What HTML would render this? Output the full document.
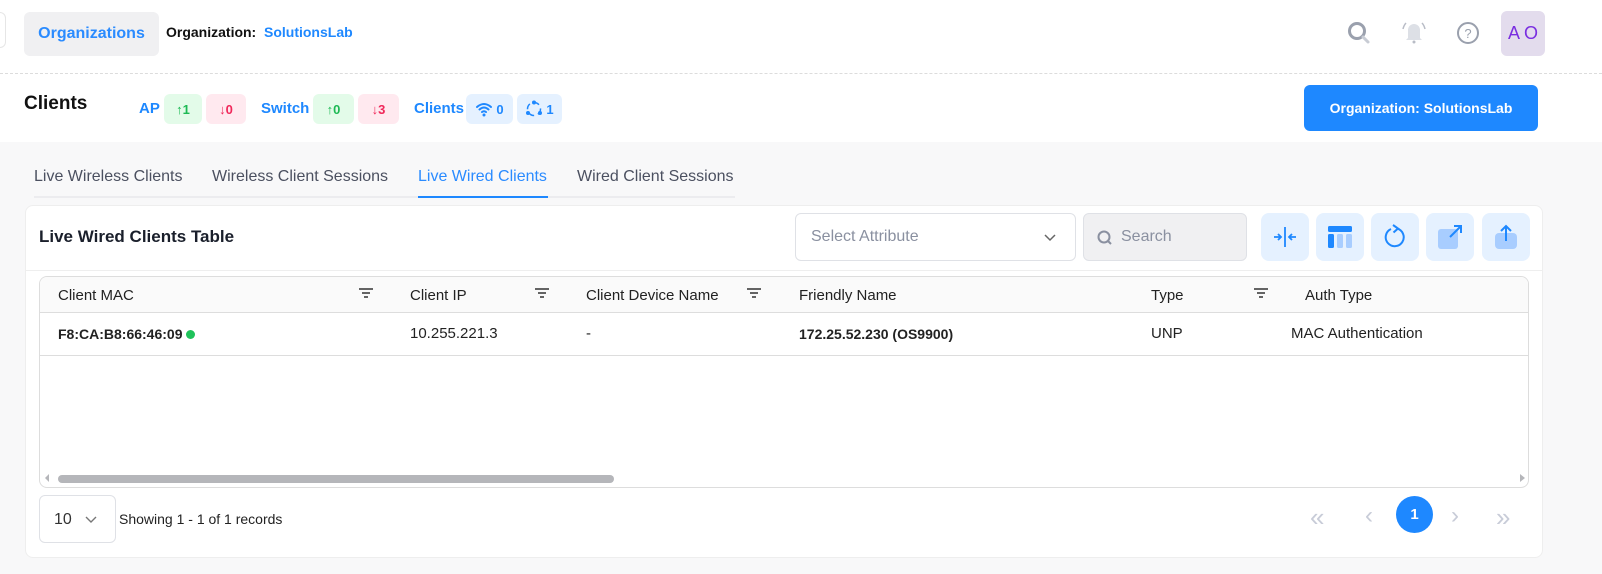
<!DOCTYPE html>
<html><head><meta charset="utf-8"><style>
*{box-sizing:border-box;margin:0;padding:0}
body{width:1602px;height:574px;overflow:hidden;font-family:"Liberation Sans",sans-serif;background:#f8f8f9;position:relative;color:#1f2430}
.abs{position:absolute}
.top{left:0;top:0;width:1602px;height:142px;background:#fff}
.dash{left:0;top:73px;width:1602px;border-top:1px dashed #dcdcdc}
.blue{color:#1e88ff}
.badge{position:absolute;top:94px;height:30px;border-radius:6px;font-size:13px;font-weight:bold;display:flex;align-items:center;justify-content:center;gap:3px}
.g{background:#e3fbe9;color:#1db954}.r{background:#ffe9ef;color:#f0285a}.b{background:#e5f1ff;color:#1e88ff}
.tab{position:absolute;top:168px;font-size:16px;color:#4b5060}
.card{left:25px;top:205px;width:1518px;height:353px;background:#fff;border-radius:8px;border:1px solid #eee}
.ib{position:absolute;top:213px;width:48px;height:48px;border-radius:8px;background:#e5f1ff;display:flex;align-items:center;justify-content:center}
.th{position:absolute;top:287px;font-size:15px;color:#222}
.td{position:absolute;top:325px;font-size:15px;color:#222}
.filt{position:absolute;top:287px}
</style></head><body>
<div class="abs top"></div>
<div class="abs" style="left:-10px;top:12px;width:16px;height:36px;border:1px solid #e6e6e6;border-radius:6px;background:#fff"></div>
<div class="abs" style="left:24px;top:12px;width:135px;height:44px;background:#f0f0f2;border-radius:6px;color:#2a8bff;font-size:16px;font-weight:bold;display:flex;align-items:center;justify-content:center">Organizations</div>
<div class="abs" style="left:166px;top:24px;font-size:14px;font-weight:bold;color:#111">Organization:&nbsp; <span class="blue">SolutionsLab</span></div>
<svg class="abs" style="left:1346px;top:20px" width="26" height="26" viewBox="0 0 26 26"><circle cx="11" cy="11" r="7.5" fill="none" stroke="#9aa0ad" stroke-width="3"/><path d="M17 17l5 5" stroke="#c8ccd4" stroke-width="3" stroke-linecap="round"/></svg>
<svg class="abs" style="left:1400px;top:18px" width="28" height="28" viewBox="0 0 28 28"><path d="M8 20V12a6 6 0 0 1 12 0v8l2 2H6z" fill="#dde0e6"/><circle cx="14" cy="24" r="1.5" fill="#b8bcc6"/><path d="M3 11q1-4 3-6M25 11q-1-4-3-6" stroke="#b8bcc6" stroke-width="1.5" fill="none"/></svg>
<svg class="abs" style="left:1456px;top:21px" width="24" height="24" viewBox="0 0 24 24"><circle cx="12" cy="12" r="10" fill="none" stroke="#9aa0ad" stroke-width="2"/><text x="12" y="17" text-anchor="middle" font-size="13" fill="#9aa0ad" font-family="Liberation Sans">?</text></svg>
<div class="abs" style="left:1501px;top:11px;width:44px;height:45px;background:#e3dced;border-radius:6px;color:#7a2ee0;font-size:18px;display:flex;align-items:center;justify-content:center">A O</div>
<div class="abs dash"></div>
<div class="abs" style="left:24px;top:93px;font-size:19px;font-weight:bold;color:#111">Clients</div>
<div class="abs blue" style="left:139px;top:100px;font-size:15px;font-weight:bold">AP</div>
<div class="badge g" style="left:164px;width:38px">↑1</div>
<div class="badge r" style="left:206px;width:40px">↓0</div>
<div class="abs blue" style="left:261px;top:100px;font-size:15px;font-weight:bold">Switch</div>
<div class="badge g" style="left:313px;width:41px">↑0</div>
<div class="badge r" style="left:358px;width:41px">↓3</div>
<div class="abs blue" style="left:414px;top:100px;font-size:15px;font-weight:bold">Clients</div>
<div class="badge b" style="left:466px;width:47px"><svg width="18" height="18" viewBox="0 0 18 18"><path d="M2 7q7-6 14 0M4.5 9.5q4.5-4 9 0M7 12q2-1.5 4 0" stroke="#1e88ff" stroke-width="2" fill="none" stroke-linecap="round"/><circle cx="9" cy="15" r="1.5" fill="#1e88ff"/></svg> 0</div>
<div class="badge b" style="left:517px;width:45px"><svg width="18" height="18" viewBox="0 0 18 18"><circle cx="9" cy="9" r="6.5" fill="none" stroke="#1e88ff" stroke-width="1.5" stroke-dasharray="6 4"/><circle cx="9" cy="2.5" r="2" fill="#1e88ff"/><circle cx="3" cy="13" r="2" fill="#1e88ff"/><circle cx="15" cy="13" r="2" fill="#1e88ff"/></svg> 1</div>
<div class="abs" style="left:1304px;top:85px;width:234px;height:46px;background:#1e88ff;border-radius:6px;color:#fff;font-size:14px;font-weight:bold;display:flex;align-items:center;justify-content:center">Organization: SolutionsLab</div>

<div class="tab" style="left:34px">Live Wireless Clients</div>
<div class="tab" style="left:212px">Wireless Client Sessions</div>
<div class="tab" style="left:418px;color:#2a8bff">Live Wired Clients</div>
<div class="tab" style="left:577px">Wired Client Sessions</div>
<div class="abs" style="left:34px;top:196px;width:701px;height:2px;background:#ececef"></div>
<div class="abs" style="left:418px;top:196px;width:130px;height:2px;background:#1e88ff"></div>

<div class="abs card"></div>
<div class="abs" style="left:39px;top:227px;font-size:17px;font-weight:bold;color:#1a1f2b">Live Wired Clients Table</div>
<div class="abs" style="left:795px;top:213px;width:281px;height:48px;border:1px solid #dfe1e6;border-radius:6px;background:#fff;font-size:16px;color:#8a90a0;padding:14px 0 0 15px">Select Attribute<svg style="position:absolute;right:18px;top:18px" width="14" height="10" viewBox="0 0 14 10"><path d="M2 3l5 5 5-5" stroke="#666" stroke-width="1.5" fill="none"/></svg></div>
<div class="abs" style="left:1083px;top:213px;width:164px;height:48px;border:1px solid #dfe1e6;border-radius:6px;background:#f0f0f2;font-size:16px;color:#8a90a0;padding:14px 0 0 37px"><svg style="position:absolute;left:12px;top:15px" width="18" height="18" viewBox="0 0 18 18"><circle cx="8" cy="8" r="5.5" fill="none" stroke="#8a90a0" stroke-width="2"/><path d="M12 12l3 3" stroke="#8a90a0" stroke-width="2"/></svg>Search</div>
<div class="ib" style="left:1261px"><svg width="28" height="28" viewBox="0 0 28 28"><path d="M14 4v20M3 14h7M7 11l3 3-3 3M25 14h-7M21 11l-3 3 3 3" stroke="#1e88ff" stroke-width="1.8" fill="none"/></svg></div>
<div class="ib" style="left:1316px"><svg width="26" height="26" viewBox="0 0 26 26"><rect x="1" y="2" width="24" height="6" rx="1.5" fill="#1e88ff"/><rect x="1" y="10" width="6" height="14" rx="1.5" fill="#1e88ff"/><rect x="10" y="10" width="6" height="14" rx="1.5" fill="#a8cdff"/><rect x="19" y="10" width="6" height="14" rx="1.5" fill="#a8cdff"/></svg></div>
<div class="ib" style="left:1371px"><svg width="26" height="26" viewBox="0 0 26 26"><path d="M15 4.5A9 9 0 1 1 9 5" stroke="#1e88ff" stroke-width="2" fill="none"/><path d="M11 1l5 3.5-4.5 4" stroke="#1e88ff" stroke-width="2" fill="none"/></svg></div>
<div class="ib" style="left:1426px"><svg width="28" height="28" viewBox="0 0 28 28"><rect x="2" y="6" width="20" height="20" rx="3" fill="#a8cdff"/><path d="M14 14L25 3M18 3h7v7" stroke="#1e88ff" stroke-width="2" fill="none"/></svg></div>
<div class="ib" style="left:1482px"><svg width="26" height="28" viewBox="0 0 26 28"><rect x="2" y="10" width="22" height="16" rx="4" fill="#a8cdff"/><path d="M13 18V3M8 8l5-5 5 5" stroke="#1e88ff" stroke-width="2" fill="none"/></svg></div>
<div class="abs" style="left:26px;top:270px;width:1516px;border-top:1px solid #eee"></div>

<div class="abs" style="left:39px;top:276px;width:1490px;height:212px;border:1px solid #ddd;border-radius:8px;overflow:hidden">
<div style="height:36px;background:#fafafa;border-bottom:1px solid #ddd"></div>
<div style="height:43px;border-bottom:1px solid #ddd"></div>
<div style="position:absolute;left:18px;bottom:4px;width:556px;height:8px;background:#b5b6ba;border-radius:4px"></div>
<div style="position:absolute;left:5px;bottom:5px;border:4px solid transparent;border-right-color:#b5b6ba;border-left:0"></div>
<div style="position:absolute;right:3px;bottom:5px;border:4px solid transparent;border-left:5px solid #b5b6ba;border-right:0"></div>
</div>
<div class="th" style="left:58px">Client MAC</div>
<div class="th" style="left:410px">Client IP</div>
<div class="th" style="left:586px">Client Device Name</div>
<div class="th" style="left:799px">Friendly Name</div>
<div class="th" style="left:1151px">Type</div>
<div class="th" style="left:1305px">Auth Type</div>
<svg class="filt" style="left:359px" width="14" height="12"><path d="M0 2h14M3 6h8M5 10h4" stroke="#333" stroke-width="1.6"/></svg>
<svg class="filt" style="left:535px" width="14" height="12"><path d="M0 2h14M3 6h8M5 10h4" stroke="#333" stroke-width="1.6"/></svg>
<svg class="filt" style="left:747px" width="14" height="12"><path d="M0 2h14M3 6h8M5 10h4" stroke="#333" stroke-width="1.6"/></svg>
<svg class="filt" style="left:1254px" width="14" height="12"><path d="M0 2h14M3 6h8M5 10h4" stroke="#333" stroke-width="1.6"/></svg>
<div class="td blue" style="left:58px;font-weight:bold;font-size:14px;top:326px">F8:CA:B8:66:46:09 <span style="display:inline-block;width:9px;height:9px;border-radius:50%;background:#1fc25a"></span></div>
<div class="td" style="left:410px">10.255.221.3</div>
<div class="td" style="left:586px">-</div>
<div class="td blue" style="left:799px;font-weight:bold;font-size:14px;top:326px">172.25.52.230 (OS9900)</div>
<div class="td" style="left:1151px">UNP</div>
<div class="td" style="left:1291px">MAC Authentication</div>

<div class="abs" style="left:39px;top:495px;width:77px;height:48px;border:1px solid #dfe1e6;border-radius:6px;font-size:16px;color:#333;padding:15px 0 0 14px">10<svg style="position:absolute;left:45px;top:20px" width="12" height="8" viewBox="0 0 12 8"><path d="M1 1l5 5 5-5" stroke="#777" stroke-width="1.4" fill="none"/></svg></div>
<div class="abs" style="left:119px;top:511px;font-size:14px;color:#222">Showing 1 - 1 of 1 records</div>
<div class="abs" style="left:1310px;top:502px;font-size:26px;color:#c8ccd8">«</div>
<div class="abs" style="left:1365px;top:502px;font-size:24px;color:#c8ccd8">‹</div>
<div class="abs" style="left:1396px;top:496px;width:37px;height:37px;border-radius:50%;background:#1e88ff;color:#fff;font-weight:bold;font-size:15px;display:flex;align-items:center;justify-content:center">1</div>
<div class="abs" style="left:1451px;top:502px;font-size:24px;color:#c8ccd8">›</div>
<div class="abs" style="left:1496px;top:502px;font-size:26px;color:#c8ccd8">»</div>
</body></html>
